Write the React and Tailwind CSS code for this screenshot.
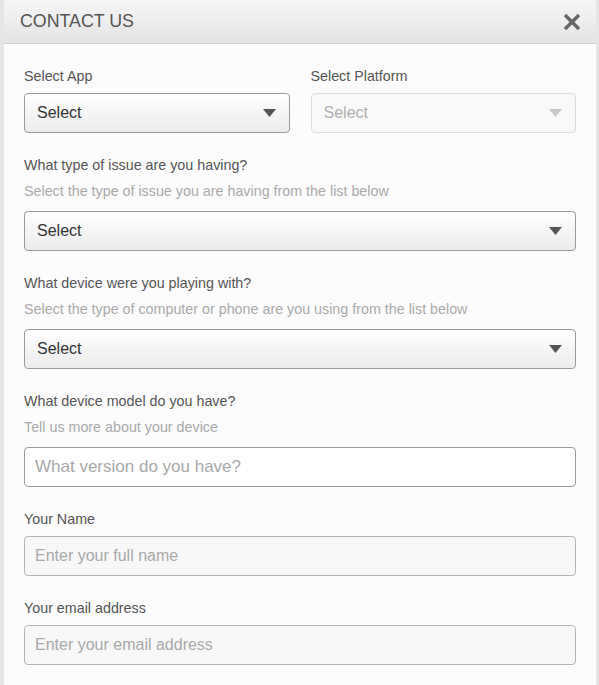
import { useState } from 'react'

const Arrow = ({ disabled }) => (
  <svg width="13" height="8" viewBox="0 0 13 8" className="shrink-0">
    <path d="M0 0 H13 L6.5 8 Z" fill={disabled ? '#c8c8c8' : '#555555'} />
  </svg>
)

const SelectBox = ({ disabled }) => (
  <div
    className={
      'flex h-10 items-center justify-between rounded-[4px] border pl-3 pr-[13px] text-base ' +
      (disabled
        ? 'border-[#dddddd] bg-[#f9f9f9] text-[#b0b0b0]'
        : 'border-[#9a9a9a] bg-gradient-to-b from-white to-[#ececec] text-[#333333]')
    }
  >
    <span>Select</span>
    <Arrow disabled={disabled} />
  </div>
)

const Label = ({ children }) => (
  <div className="text-[14.3px] leading-5 text-[#555555]">{children}</div>
)

const Hint = ({ children }) => (
  <div className="mt-[6px] text-[14.3px] leading-5 text-[#aaaaaa]">{children}</div>
)

const App = () => {
  const [model, setModel] = useState('')
  const [name, setName] = useState('')
  const [email, setEmail] = useState('')

  return (
    <div
      className="flex min-h-[685px] w-full bg-[#e6e6e6] pl-1 pr-[3px]"
      style={{ fontFamily: '"Liberation Sans", Arial, sans-serif' }}
    >
      <div className="flex flex-1 flex-col bg-[#fcfcfc]">
        <div className="flex h-[44px] items-center justify-between border-b border-[#cfcfd4] bg-gradient-to-b from-[#f6f6f6] to-[#e4e4e4] pl-4 pr-[15px]">
          <span className="text-[17.8px] text-[#555555]">CONTACT US</span>
          <svg width="18" height="18" viewBox="0 0 18 18">
            <path d="M2 2 L16 16 M16 2 L2 16" stroke="#666666" strokeWidth="3.4" />
          </svg>
        </div>

        <div className="flex flex-col px-5 pt-[22px] pb-5">
          <div className="flex gap-[21px]">
            <div className="flex-1">
              <Label>Select App</Label>
              <div className="mt-[7px]">
                <SelectBox />
              </div>
            </div>
            <div className="flex-1">
              <Label>Select Platform</Label>
              <div className="mt-[7px]">
                <SelectBox disabled />
              </div>
            </div>
          </div>

          <div className="mt-[22px]">
            <Label>What type of issue are you having?</Label>
            <Hint>Select the type of issue you are having from the list below</Hint>
            <div className="mt-[10px]">
              <SelectBox />
            </div>
          </div>

          <div className="mt-[22px]">
            <Label>What device were you playing with?</Label>
            <Hint>Select the type of computer or phone are you using from the list below</Hint>
            <div className="mt-[10px]">
              <SelectBox />
            </div>
          </div>

          <div className="mt-[22px]">
            <Label>What device model do you have?</Label>
            <Hint>Tell us more about your device</Hint>
            <input
              autoFocus
              value={model}
              onChange={(e) => setModel(e.target.value)}
              placeholder="What version do you have?"
              className="mt-[10px] h-10 w-full rounded-[4px] border border-[#9a9a9a] bg-white px-[10px] text-[17px] text-[#333333] caret-black outline-none placeholder:text-[#a8a8a8]"
            />
          </div>

          <div className="mt-[22px]">
            <Label>Your Name</Label>
            <input
              value={name}
              onChange={(e) => setName(e.target.value)}
              placeholder="Enter your full name"
              className="mt-[7px] h-10 w-full rounded-[4px] border border-[#b4b4b4] bg-[#f8f8f8] px-[10px] text-base text-[#333333] outline-none placeholder:text-[#a8a8a8]"
            />
          </div>

          <div className="mt-[22px]">
            <Label>Your email address</Label>
            <input
              value={email}
              onChange={(e) => setEmail(e.target.value)}
              placeholder="Enter your email address"
              className="mt-[7px] h-10 w-full rounded-[4px] border border-[#b4b4b4] bg-[#f8f8f8] px-[10px] text-base text-[#333333] outline-none placeholder:text-[#a8a8a8]"
            />
          </div>
        </div>
      </div>
    </div>
  )
}

export default App
